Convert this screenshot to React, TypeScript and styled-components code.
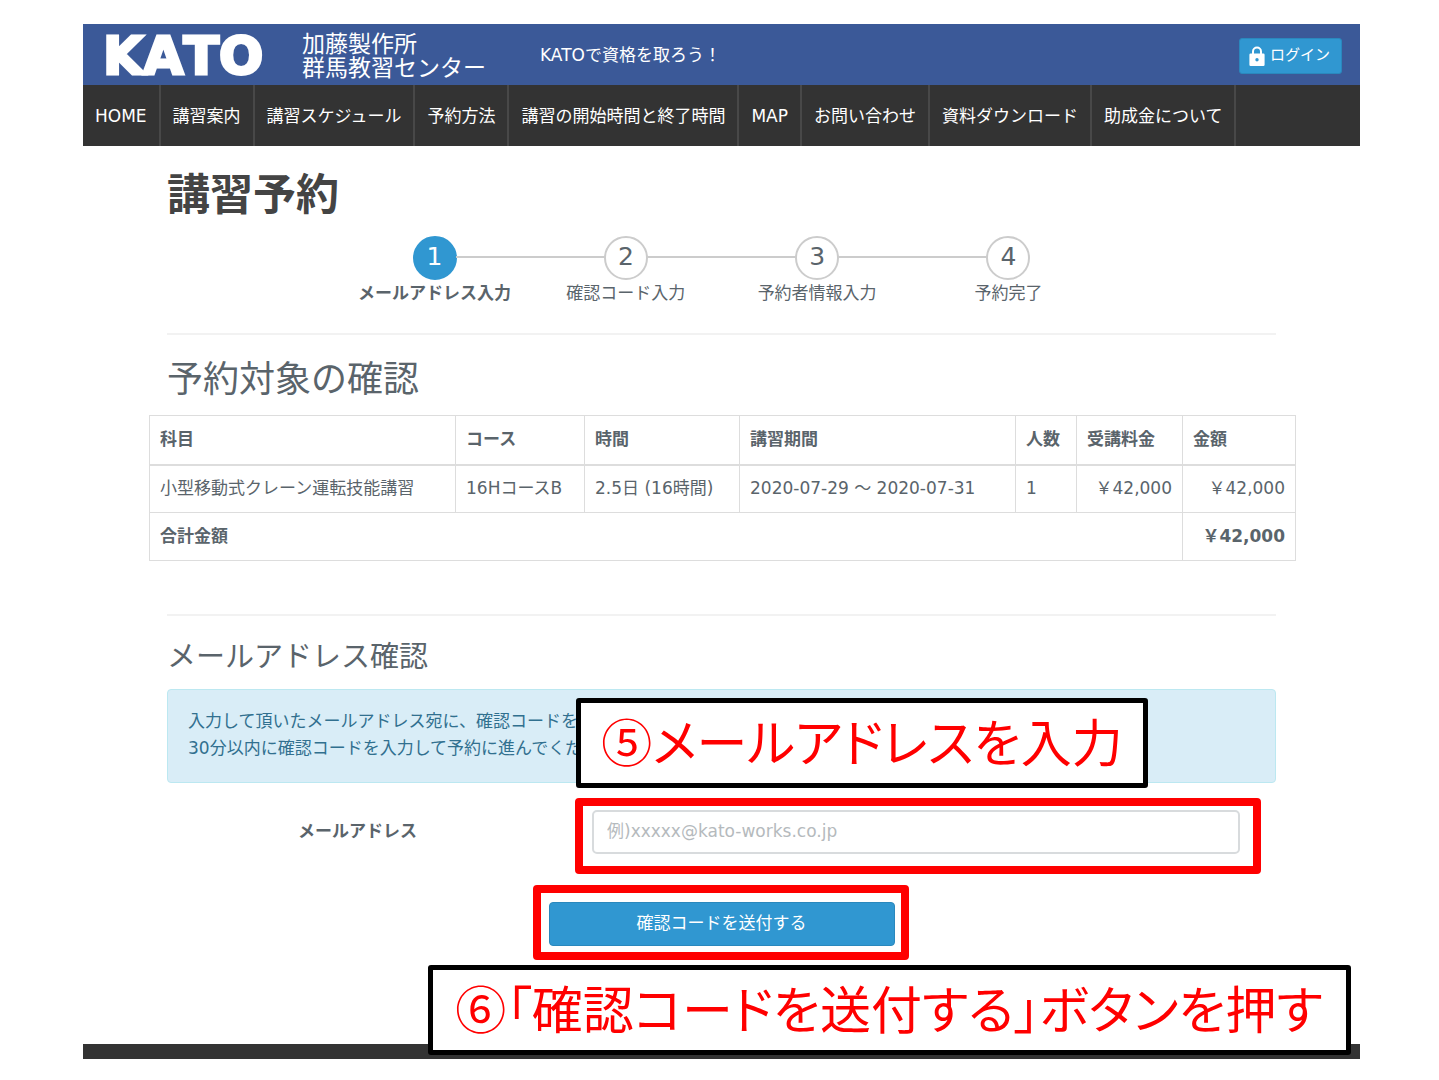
import React from 'react';
import styled, { createGlobalStyle, css } from 'styled-components';

const color = {
  brand: '#3b5998',
  nav: '#333333',
  primary: '#3097d1',
  primaryDark: '#2a88bd',
  text: '#5a646b',
  heading: '#444444',
  line: '#dddddd',
  mark: '#ff0000',
};

const GlobalStyle = createGlobalStyle`
  *, *::before, *::after { box-sizing: border-box; }
  body {
    margin: 0;
    background: #ffffff;
    color: ${color.text};
    font-family: 'DejaVu Sans', 'Noto Sans CJK JP', sans-serif;
    font-size: 17px;
    line-height: 27px;
  }
`;

const Page = styled.div`
  padding: 24px 79px 20px 83px;
`;

const Header = styled.header`
  display: flex;
  align-items: center;
  height: 61px;
  padding: 2px 18px 0 20px;
  background: ${color.brand};
  color: #ffffff;
`;

const Brand = styled.a`
  display: flex;
  align-items: center;
  color: inherit;
  text-decoration: none;
`;

const Logo = styled.span`
  width: 199px;
  font-size: 52px;
  font-weight: 700;
  font-kerning: none;
  line-height: 58px;
  -webkit-text-stroke: 3px #ffffff;
`;

const OrgName = styled.span`
  display: flex;
  flex-direction: column;
  font-size: 23px;
  line-height: 24px;
`;

const Tagline = styled.p`
  flex: 1;
  margin: 0 0 0 54px;
`;

const LoginButton = styled.button`
  display: flex;
  align-items: center;
  gap: 5px;
  height: 36px;
  padding: 0 11px 0 9px;
  border: 1px solid ${color.primaryDark};
  border-radius: 3px;
  background: ${color.primary};
  color: #ffffff;
  font: inherit;
  font-size: 15px;
`;

const Nav = styled.nav`
  background: ${color.nav};
`;

const NavList = styled.ul`
  display: flex;
  margin: 0;
  padding: 0;
  list-style: none;
`;

const NavLink = styled.a`
  display: block;
  padding: 1px 12px 0;
  border-right: 2px solid #484848;
  color: #ffffff;
  line-height: 60px;
  text-decoration: none;
  white-space: nowrap;
`;

const Main = styled.main`
  padding: 0 84px;
`;

const Title = styled.h1`
  margin: 0;
  padding: 21px 0 13px;
  color: ${color.heading};
  font-size: 43px;
  font-weight: 700;
  line-height: 56px;
`;

const Steps = styled.ol`
  display: grid;
  grid-template-columns: repeat(4, 1fr);
  width: 69%;
  margin: 0 auto 26px;
  padding: 0;
  list-style: none;
`;

const Step = styled.li<{ $active?: boolean }>`
  display: flex;
  flex-direction: column;
  align-items: center;
  position: relative;
  font-weight: ${(p) => (p.$active ? 700 : 400)};
  white-space: nowrap;

  &:not(:first-child)::before {
    content: '';
    position: absolute;
    top: 20px;
    right: calc(50% + 21px);
    width: calc(100% - 42px);
    height: 2px;
    background: #cccccc;
  }
`;

const StepNumber = styled.span<{ $active?: boolean }>`
  width: 44px;
  height: 44px;
  border: 2px solid ${(p) => (p.$active ? color.primary : '#cccccc')};
  border-radius: 50%;
  background: ${(p) => (p.$active ? color.primary : '#ffffff')};
  color: ${(p) => (p.$active ? '#ffffff' : color.text)};
  font-size: 25px;
  font-weight: 400;
  line-height: 38px;
  text-align: center;
`;

const Divider = styled.hr`
  margin: 0;
  border: 0;
  border-top: 2px solid #f2f2f2;
`;

const SectionTitle = styled.h2`
  margin: 0;
  padding: 20px 0 10px;
  font-size: 36px;
  font-weight: 400;
  line-height: 50px;
`;

const SubTitle = styled.h3`
  margin: 0;
  padding: 20px 0 11px;
  font-size: 29px;
  font-weight: 400;
  line-height: 42px;
`;

const TableFrame = styled.div`
  margin: 0 -18px 53px;
`;

const Table = styled.table`
  width: 100%;
  border-collapse: collapse;
  table-layout: fixed;
`;

const cell = css`
  height: 49px;
  padding: 0 10px;
  border: 1px solid ${color.line};
  white-space: nowrap;
`;

const HeadCell = styled.th`
  ${cell}
  border-bottom-width: 2px;
  text-align: left;
`;

const Cell = styled.td<{ $amount?: boolean }>`
  ${cell}
  height: 48px;
  text-align: ${(p) => (p.$amount ? 'right' : 'left')};
`;

const TotalCell = styled(Cell)`
  font-weight: 700;
`;

const Notice = styled.div`
  position: relative;
  padding: 18px 20px 20px;
  border: 1px solid #bce8f1;
  border-radius: 4px;
  background: #d9edf7;
  color: #31708f;
`;

const NoticeText = styled.p`
  margin: 0;
`;

const Callout = styled.div`
  position: absolute;
  z-index: 2;
  height: 90px;
  border: 5px solid #000000;
  border-radius: 3px;
  background: #ffffff;
  color: ${color.mark};
  font-family: 'Noto Sans CJK JP', sans-serif;
  font-size: 51px;
  line-height: 74px;
  font-feature-settings: 'palt';
  text-align: center;
  white-space: nowrap;
`;

const AddressCallout = styled(Callout)`
  top: 8px;
  left: 408px;
  width: 572px;
`;

const SubmitCallout = styled(Callout)`
  top: 63px;
  left: -121px;
  width: 923px;
`;

const Highlight = styled.span`
  position: absolute;
  border: 8px solid ${color.mark};
  border-radius: 4px;
  pointer-events: none;
`;

const FieldHighlight = styled(Highlight)`
  inset: -12px -21px -20px -17px;
`;

const SubmitHighlight = styled(Highlight)`
  inset: -17px -14px -14px -16px;
`;

const FieldRow = styled.div`
  display: grid;
  grid-template-columns: 250fr 648fr;
  column-gap: 175px;
  align-items: center;
  margin: 27px 0 48px;
  padding-right: 36px;
`;

const FieldLabel = styled.label`
  padding-bottom: 2px;
  font-weight: 700;
  text-align: right;
`;

const FieldControl = styled.div`
  position: relative;
`;

const TextInput = styled.input`
  display: block;
  width: 100%;
  height: 44px;
  padding: 0 13px 2px;
  border: 2px solid #d8dbdd;
  border-radius: 5px;
  background: #ffffff;
  color: ${color.text};
  font: inherit;

  &::placeholder {
    color: #b5babd;
    opacity: 1;
  }
`;

const Actions = styled.div`
  position: relative;
  width: 346px;
  margin: 0 auto 98px;
`;

const SubmitButton = styled.button`
  display: block;
  width: 100%;
  height: 44px;
  padding: 0 0 2px;
  border: 1px solid ${color.primaryDark};
  border-radius: 4px;
  background: ${color.primary};
  color: #ffffff;
  font: inherit;
`;

const Footer = styled.footer`
  height: 15px;
  background: ${color.nav};
`;

const navItems = [
  'HOME',
  '講習案内',
  '講習スケジュール',
  '予約方法',
  '講習の開始時間と終了時間',
  'MAP',
  'お問い合わせ',
  '資料ダウンロード',
  '助成金について',
];

const steps = ['メールアドレス入力', '確認コード入力', '予約者情報入力', '予約完了'];

const columns = [
  { title: '科目', width: 306 },
  { title: 'コース', width: 129 },
  { title: '時間', width: 155 },
  { title: '講習期間', width: 276 },
  { title: '人数', width: 61 },
  { title: '受講料金', width: 106 },
  { title: '金額', width: 113 },
];

const LockIcon = () => (
  <svg width="16" height="20" viewBox="0 0 16 20" aria-hidden="true">
    <path d="M4 9V5.500a4 4 0 0 1 8 0V9" fill="none" stroke="#fff" strokeWidth="2" />
    <path
      fill="#fff"
      fillRule="evenodd"
      d="M1.600 7.500h12.800a1.200 1.200 0 0 1 1.200 1.200v10a1.200 1.200 0 0 1-1.200 1.200H1.600a1.200 1.200 0 0 1-1.200-1.200v-10a1.200 1.200 0 0 1 1.200-1.200ZM8 12a1.700 1.700 0 1 0 0 3.400A1.700 1.700 0 0 0 8 12Z"
    />
  </svg>
);

export default function App() {
  return (
    <>
      <GlobalStyle />
      <Page>
        <Header>
          <Brand href="#">
            <Logo>KATO</Logo>
            <OrgName>
              <span>加藤製作所</span>
              <span>群馬教習センター</span>
            </OrgName>
          </Brand>
          <Tagline>KATOで資格を取ろう！</Tagline>
          <LoginButton type="button">
            <LockIcon />
            ログイン
          </LoginButton>
        </Header>
        <Nav>
          <NavList>
            {navItems.map((item) => (
              <li key={item}>
                <NavLink href="#">{item}</NavLink>
              </li>
            ))}
          </NavList>
        </Nav>
        <Main>
          <Title>講習予約</Title>
          <Steps>
            {steps.map((label, i) => (
              <Step key={label} $active={i === 0}>
                <StepNumber $active={i === 0}>{i + 1}</StepNumber>
                {label}
              </Step>
            ))}
          </Steps>
          <Divider />
          <SectionTitle>予約対象の確認</SectionTitle>
          <TableFrame>
            <Table>
              <colgroup>
                {columns.map((c) => (
                  <col key={c.title} width={c.width} />
                ))}
              </colgroup>
              <thead>
                <tr>
                  {columns.map((c) => (
                    <HeadCell key={c.title} scope="col">
                      {c.title}
                    </HeadCell>
                  ))}
                </tr>
              </thead>
              <tbody>
                <tr>
                  <Cell>小型移動式クレーン運転技能講習</Cell>
                  <Cell>16HコースB</Cell>
                  <Cell>2.5日 (16時間)</Cell>
                  <Cell>2020-07-29 ～ 2020-07-31</Cell>
                  <Cell>1</Cell>
                  <Cell $amount>￥42,000</Cell>
                  <Cell $amount>￥42,000</Cell>
                </tr>
                <tr>
                  <TotalCell colSpan={6}>合計金額</TotalCell>
                  <TotalCell $amount>￥42,000</TotalCell>
                </tr>
              </tbody>
            </Table>
          </TableFrame>
          <Divider />
          <SubTitle>メールアドレス確認</SubTitle>
          <Notice>
            <NoticeText>
              入力して頂いたメールアドレス宛に、確認コードを
              <br />
              30分以内に確認コードを入力して予約に進んでくだ
            </NoticeText>
            <AddressCallout>⑤メールアドレスを入力</AddressCallout>
          </Notice>
          <form onSubmit={(e) => e.preventDefault()}>
            <FieldRow>
              <FieldLabel htmlFor="email">メールアドレス</FieldLabel>
              <FieldControl>
                <TextInput id="email" type="email" placeholder="例)xxxxx@kato-works.co.jp" />
                <FieldHighlight />
              </FieldControl>
            </FieldRow>
            <Actions>
              <SubmitButton type="submit">確認コードを送付する</SubmitButton>
              <SubmitHighlight />
              <SubmitCallout>⑥「確認コードを送付する」ボタンを押す</SubmitCallout>
            </Actions>
          </form>
        </Main>
        <Footer />
      </Page>
    </>
  );
}
